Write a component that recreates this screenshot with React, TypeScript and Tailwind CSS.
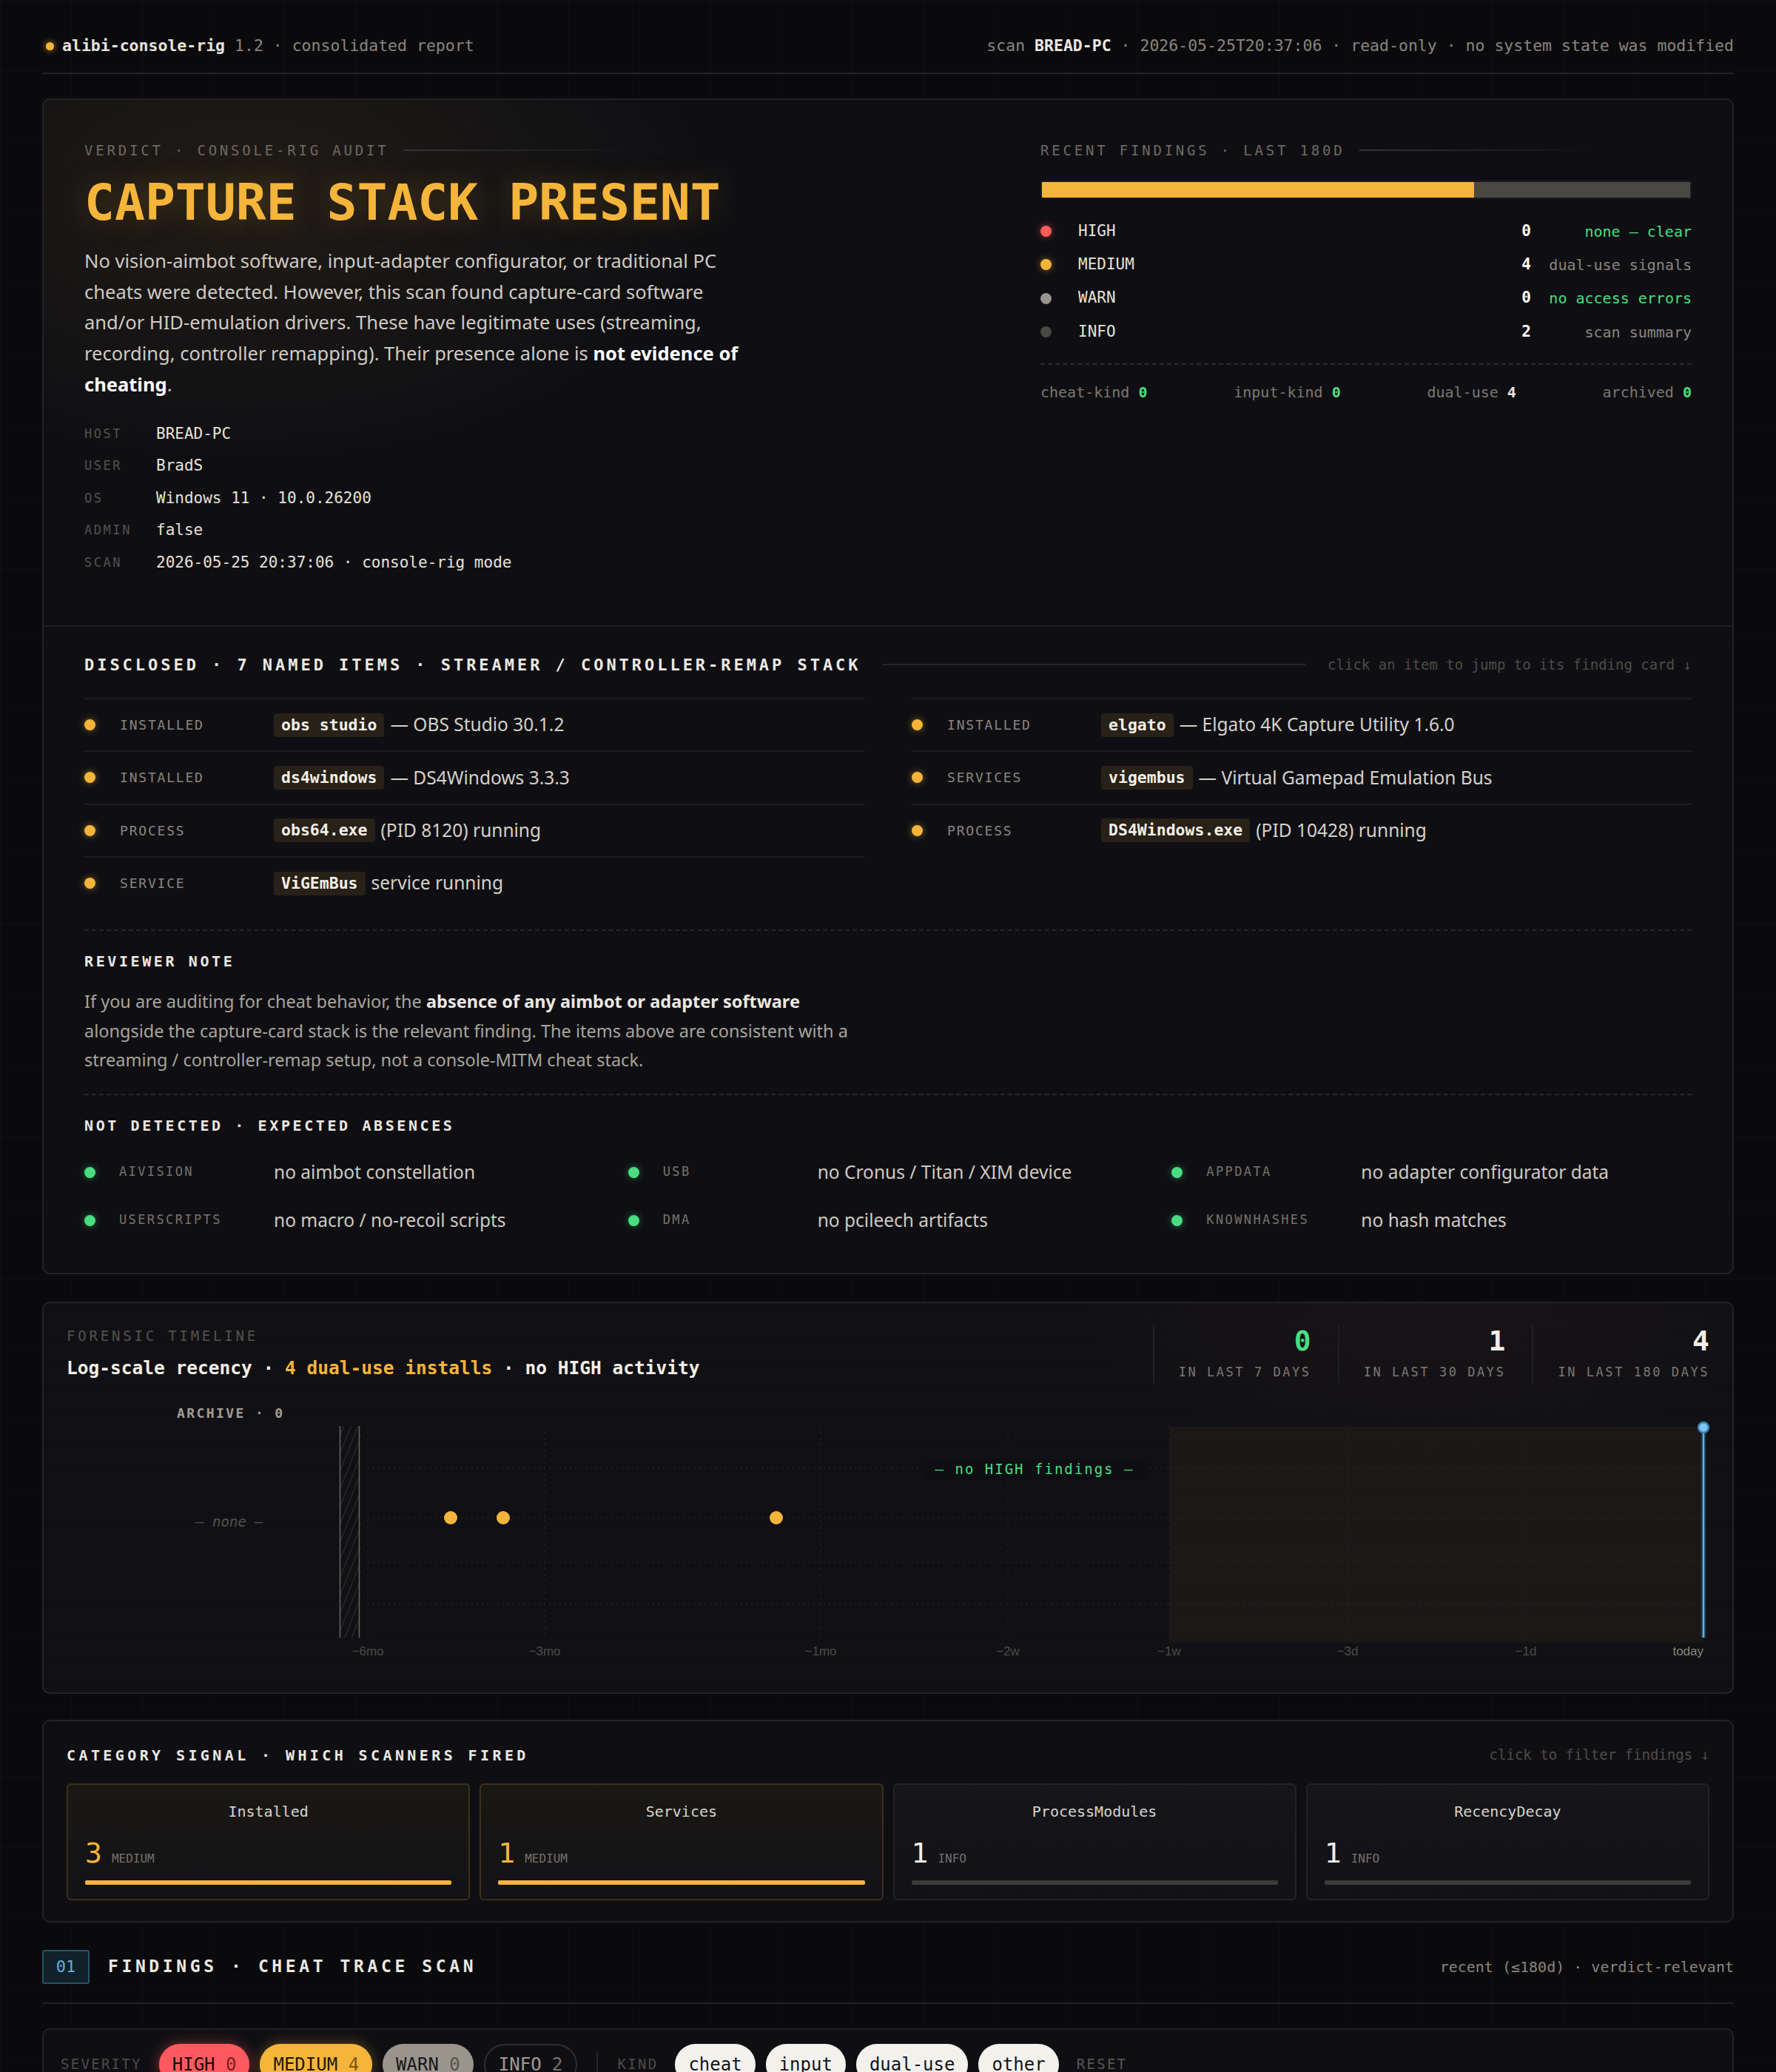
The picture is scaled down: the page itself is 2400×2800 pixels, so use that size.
import React from 'react';

type Tone = 'high' | 'medium' | 'warn' | 'info' | 'ok';

const dotTone: Record<Tone, string> = {
  high: 'bg-[#ff5a5a] shadow-[0_0_10px_rgba(255,90,90,0.55)]',
  medium: 'bg-[#f5b53a] shadow-[0_0_10px_rgba(245,181,58,0.5)]',
  warn: 'bg-[#9a958c]',
  info: 'bg-[#4a4844]',
  ok: 'bg-[#4ade80] shadow-[0_0_10px_rgba(74,222,128,0.45)]',
};

const Dot: React.FC<{ tone: Tone }> = ({ tone }) => (
  <span className={`h-[15px] w-[15px] shrink-0 rounded-full ${dotTone[tone]}`} />
);

const severityRows: { label: string; tone: Tone; count: number; note: string; noteClass: string }[] = [
  { label: 'HIGH', tone: 'high', count: 0, note: 'none — clear', noteClass: 'text-[#4ade80]' },
  { label: 'MEDIUM', tone: 'medium', count: 4, note: 'dual-use signals', noteClass: 'text-[#8a857d]' },
  { label: 'WARN', tone: 'warn', count: 0, note: 'no access errors', noteClass: 'text-[#4ade80]' },
  { label: 'INFO', tone: 'info', count: 2, note: 'scan summary', noteClass: 'text-[#8a857d]' },
];

const meta = [
  ['HOST', 'BREAD-PC'],
  ['USER', 'BradS'],
  ['OS', 'Windows 11 · 10.0.26200'],
  ['ADMIN', 'false'],
  ['SCAN', '2026-05-25 20:37:06 · console-rig mode'],
];

const disclosed = [
  { kind: 'INSTALLED', name: 'obs studio', rest: '— OBS Studio 30.1.2' },
  { kind: 'INSTALLED', name: 'elgato', rest: '— Elgato 4K Capture Utility 1.6.0' },
  { kind: 'INSTALLED', name: 'ds4windows', rest: '— DS4Windows 3.3.3' },
  { kind: 'SERVICES', name: 'vigembus', rest: '— Virtual Gamepad Emulation Bus' },
  { kind: 'PROCESS', name: 'obs64.exe', rest: '(PID 8120) running' },
  { kind: 'PROCESS', name: 'DS4Windows.exe', rest: '(PID 10428) running' },
  { kind: 'SERVICE', name: 'ViGEmBus', rest: 'service running' },
];

const absences = [
  ['AIVISION', 'no aimbot constellation'],
  ['USB', 'no Cronus / Titan / XIM device'],
  ['APPDATA', 'no adapter configurator data'],
  ['USERSCRIPTS', 'no macro / no-recoil scripts'],
  ['DMA', 'no pcileech artifacts'],
  ['KNOWNHASHES', 'no hash matches'],
];

const categories = [
  { name: 'Installed', count: 3, sev: 'MEDIUM', hot: true },
  { name: 'Services', count: 1, sev: 'MEDIUM', hot: true },
  { name: 'ProcessModules', count: 1, sev: 'INFO', hot: false },
  { name: 'RecencyDecay', count: 1, sev: 'INFO', hot: false },
];

// x positions inside the timeline svg (log-scale recency axis)
const ticks = [
  { label: '−6mo', x: 407 },
  { label: '−3mo', x: 646 },
  { label: '−1mo', x: 1019 },
  { label: '−2w', x: 1272 },
  { label: '−1w', x: 1490 },
  { label: '−3d', x: 1731 },
  { label: '−1d', x: 1972 },
];
const lanes = [92, 159, 219, 276];
const hits = [519, 590, 959];

const SectionLabel: React.FC<{ children: React.ReactNode }> = ({ children }) => (
  <div className="flex h-[28px] items-center">
    <span className="text-[19px] tracking-[0.2em] text-[#6e6961]">{children}</span>
    <span className="ml-[20px] h-[2px] w-[310px] bg-gradient-to-r from-[#34343c] to-transparent" />
  </div>
);

const Timeline: React.FC = () => (
  <svg width="2220" height="355" viewBox="0 0 2220 355" className="mt-[23px] block">
    <defs>
      <pattern id="hatch" width="9" height="9" patternUnits="userSpaceOnUse" patternTransform="rotate(22)">
        <line x1="0" y1="0" x2="0" y2="9" stroke="#3f3d39" strokeWidth="1.4" />
      </pattern>
    </defs>
    <text x="149" y="24" fill="#a29d95" fontSize="18" fontWeight="700" letterSpacing="2.4" fontFamily="DejaVu Sans Mono, monospace">
      ARCHIVE · 0
    </text>
    <text x="220" y="171" fill="#57534d" fontSize="19" fontStyle="italic" textAnchor="middle" fontFamily="DejaVu Sans Mono, monospace">
      – none –
    </text>
    <rect x="369" y="35" width="27" height="286" fill="url(#hatch)" />
    <line x1="369.5" y1="35" x2="369.5" y2="321" stroke="#6a665f" strokeWidth="1.5" />
    <line x1="395.5" y1="35" x2="395.5" y2="321" stroke="#6a665f" strokeWidth="1.5" />
    <rect x="1490" y="36" width="722" height="292" fill="rgba(245,181,58,0.045)" />
    {ticks.map((t) => (
      <line key={t.label} x1={t.x} y1="35" x2={t.x} y2="321" stroke="#26262c" strokeWidth="1.2" strokeDasharray="2 6" />
    ))}
    {lanes.map((y) => (
      <line key={y} x1="407" y1={y} x2="2212" y2={y} stroke="#2a2a30" strokeWidth="1.2" strokeDasharray="2 5" />
    ))}
    <rect x="1156" y="80" width="304" height="28" fill="#0f0f13" />
    <text x="1308" y="100" fill="#4ade80" fontSize="19" letterSpacing="2" textAnchor="middle" fontFamily="DejaVu Sans Mono, monospace">
      – no HIGH findings –
    </text>
    {hits.map((x) => (
      <circle key={x} cx={x} cy="159" r="9" fill="#f5b53a" />
    ))}
    <line x1="2212" y1="40" x2="2212" y2="321" stroke="#1c3445" strokeWidth="7" />
    <line x1="2212" y1="40" x2="2212" y2="321" stroke="#5ab4e6" strokeWidth="2.5" />
    <circle cx="2212" cy="37" r="7" fill="#7cc8f0" stroke="#3a7fae" strokeWidth="2.5" />
    {ticks.map((t) => (
      <text key={t.label} x={t.x} y="345" fill="#4d4a45" fontSize="17" textAnchor="middle" fontFamily="Liberation Sans, sans-serif">
        {t.label}
      </text>
    ))}
    <text x="2212" y="345" fill="#8a857d" fontSize="17" textAnchor="end" fontFamily="Liberation Sans, sans-serif">
      today
    </text>
  </svg>
);

export default function App() {
  return (
    <div className="min-h-screen bg-[#0a0a0d] bg-[linear-gradient(to_right,rgba(255,255,255,0.018)_1px,transparent_1px),linear-gradient(to_bottom,rgba(255,255,255,0.018)_1px,transparent_1px)] bg-[size:96px_96px] px-[57px] pb-[160px] font-['DejaVu_Sans_Mono','Liberation_Mono',monospace] text-[#e6e1d8]">
      {/* top bar */}
      <header className="flex items-center justify-between border-b-2 border-[#222228] pt-[48px] pb-[22px] text-[21.5px] leading-[28px]">
        <div className="flex items-center">
          <span className="mr-[11px] ml-[5px] h-[11px] w-[11px] rounded-full bg-[#f5b53a] shadow-[0_0_10px_rgba(245,181,58,0.7)]" />
          <span className="font-bold text-[#e8e3da]">alibi-console-rig</span>
          <span className="text-[#8a857d]">&nbsp;1.2 · consolidated report</span>
        </div>
        <div className="text-[#8a857d]">
          scan <span className="font-bold text-[#ece8e1]">BREAD-PC</span> · 2026-05-25T20:37:06 · read-only · no system state was modified
        </div>
      </header>

      {/* verdict card */}
      <section className="mt-[33px] rounded-[10px] border-2 border-[#222228] bg-[#0f0f13] bg-[radial-gradient(ellipse_900px_520px_at_12%_8%,rgba(245,181,58,0.075),transparent_70%)]">
        <div className="grid grid-cols-[1fr_880px] gap-[60px] px-[55px] pt-[54px] pb-[63px]">
          <div>
            <SectionLabel>VERDICT · CONSOLE-RIG AUDIT</SectionLabel>
            <h1 className="mt-[23px] text-[68px] leading-[68px] font-bold text-[#f5b53a] [text-shadow:0_0_40px_rgba(245,181,58,0.25)]">
              CAPTURE STACK PRESENT
            </h1>
            <p className="mt-[24px] max-w-[890px] font-['Noto_Sans','Open_Sans',sans-serif] text-[25.5px] leading-[41.7px] text-[#cfcac2]">
              No vision-aimbot software, input-adapter configurator, or traditional PC cheats were detected. However, this
              scan found capture-card software and/or HID-emulation drivers. These have legitimate uses (streaming,
              recording, controller remapping). Their presence alone is{' '}
              <strong className="font-bold text-white">not evidence of cheating</strong>.
            </p>
            <div className="mt-[24px]">
              {meta.map(([k, v]) => (
                <div key={k} className="flex h-[43.5px] items-center">
                  <span className="w-[97px] text-[17px] tracking-[0.15em] text-[#55514b]">{k}</span>
                  <span className="text-[21px] text-[#e6e1d8]">{v}</span>
                </div>
              ))}
            </div>
          </div>

          <div>
            <SectionLabel>RECENT FINDINGS · LAST 180D</SectionLabel>
            <div className="mt-[27px] flex h-[25px] overflow-hidden rounded-[3px] border-2 border-[#1b1b20] bg-[#4a4843]">
              <div className="w-[66.7%] bg-[#f5b53a]" />
            </div>
            <div className="mt-[21px]">
              {severityRows.map((r) => (
                <div key={r.label} className="flex h-[45.3px] items-center">
                  <Dot tone={r.tone} />
                  <span className="ml-[36px] flex-1 text-[21px] text-[#e6e1d8]">{r.label}</span>
                  <span className="text-[21px] font-bold text-white">{r.count}</span>
                  <span className={`ml-[24px] w-[193px] text-right text-[20px] ${r.noteClass}`}>{r.note}</span>
                </div>
              ))}
            </div>
            <div className="mt-[20px] border-t-2 border-dashed border-[#2a2a31]" />
            <div className="mt-[23px] flex justify-between text-[20px] leading-[28px] text-[#7d786f]">
              <span>
                cheat-kind <b className="text-[#4ade80]">0</b>
              </span>
              <span>
                input-kind <b className="text-[#4ade80]">0</b>
              </span>
              <span>
                dual-use <b className="text-[#e8e3da]">4</b>
              </span>
              <span>
                archived <b className="text-[#4ade80]">0</b>
              </span>
            </div>
          </div>
        </div>

        {/* disclosed stack */}
        <div className="border-t-2 border-[#1f1f25] px-[55px] pt-[37px] pb-[38px]">
          <div className="flex h-[28px] items-center">
            <span className="text-[22px] font-bold tracking-[0.18em] text-[#ece8e1]">
              DISCLOSED · 7 NAMED ITEMS · STREAMER / CONTROLLER-REMAP STACK
            </span>
            <span className="ml-[28px] h-[2px] flex-1 bg-[#25252c]" />
            <span className="ml-[30px] text-[19px] text-[#4f4b46]">click an item to jump to its finding card ↓</span>
          </div>
          <div className="mt-[31px] grid grid-cols-2 gap-x-[64px]">
            {disclosed.map((d) => (
              <div key={d.name} className="flex h-[71.3px] items-center border-t-2 border-[#1d1d23]">
                <Dot tone="medium" />
                <span className="ml-[33px] w-[208px] text-[18px] tracking-[0.1em] text-[#8a857d]">{d.kind}</span>
                <span className="rounded-[4px] bg-[#272117] px-[10px] py-[3px] text-[21.5px] leading-[26px] font-bold text-[#f3efe7]">
                  {d.name}
                </span>
                <span className="ml-[8px] font-['Noto_Sans','Open_Sans',sans-serif] text-[24.5px] text-[#d6d1c9]">{d.rest}</span>
              </div>
            ))}
          </div>

          <div className="mt-[28px] border-t-2 border-dashed border-[#26262d]" />
          <h3 className="mt-[27px] text-[20px] leading-[28px] font-bold tracking-[0.18em] text-[#ece8e1]">REVIEWER NOTE</h3>
          <p className="mt-[21px] max-w-[1050px] font-['Noto_Sans','Open_Sans',sans-serif] text-[23.5px] leading-[39.5px] text-[#a9a49c]">
            If you are auditing for cheat behavior, the{' '}
            <strong className="font-bold text-[#ece8e1]">absence of any aimbot or adapter software</strong> alongside the
            capture-card stack is the relevant finding. The items above are consistent with a streaming / controller-remap
            setup, not a console-MITM cheat stack.
          </p>

          <div className="mt-[25px] border-t-2 border-dashed border-[#26262d]" />
          <h3 className="mt-[27px] text-[20px] leading-[28px] font-bold tracking-[0.18em] text-[#ece8e1]">
            NOT DETECTED · EXPECTED ABSENCES
          </h3>
          <div className="mt-[17px] grid grid-cols-3 gap-x-[32px]">
            {absences.map(([k, v]) => (
              <div key={k} className="flex h-[65px] items-center">
                <Dot tone="ok" />
                <span className="ml-[32px] w-[209px] text-[17px] tracking-[0.14em] text-[#77726b]">{k}</span>
                <span className="font-['Noto_Sans','Open_Sans',sans-serif] text-[24.5px] text-[#cfcac2]">{v}</span>
              </div>
            ))}
          </div>
        </div>
      </section>

      {/* forensic timeline */}
      <section className="mt-[37px] rounded-[10px] border-2 border-[#222228] bg-[#101014] bg-[radial-gradient(ellipse_700px_300px_at_82%_0%,rgba(255,90,90,0.035),transparent_70%),repeating-linear-gradient(to_bottom,rgba(255,255,255,0.012)_0px,rgba(255,255,255,0.012)_1px,transparent_1px,transparent_4px)] px-[31px] pt-[30px] pb-[40px]">
        <div className="flex items-start justify-between">
          <div>
            <div className="text-[19px] leading-[28px] tracking-[0.2em] text-[#55514b]">FORENSIC TIMELINE</div>
            <div className="mt-[13px] text-[24.5px] leading-[34px] font-bold text-[#f2eee6]">
              Log-scale recency · <span className="text-[#f5b53a]">4 dual-use installs</span> · no HIGH activity
            </div>
          </div>
          <div className="flex">
            {[
              { n: '0', label: 'IN LAST 7 DAYS', cls: 'text-[#4ade80]' },
              { n: '1', label: 'IN LAST 30 DAYS', cls: 'text-[#f2eee6]' },
              { n: '4', label: 'IN LAST 180 DAYS', cls: 'text-[#f2eee6]' },
            ].map((s, i) => (
              <div
                key={s.label}
                className={`flex h-[78px] flex-col items-end border-l-2 border-[#1f1f25] pl-[33px] ${i === 2 ? 'pr-0' : 'pr-[36px]'}`}
              >
                <span className={`text-[38px] leading-[42px] font-bold ${s.cls}`}>{s.n}</span>
                <span className="mt-[9px] text-[17px] leading-[24px] tracking-[0.15em] text-[#7d7870]">{s.label}</span>
              </div>
            ))}
          </div>
        </div>
        <Timeline />
      </section>

      {/* category signal */}
      <section className="mt-[35px] rounded-[10px] border-2 border-[#222228] bg-[#0f0f13] px-[31px] pt-[32px] pb-[28px]">
        <div className="flex h-[28px] items-center justify-between">
          <span className="text-[20px] font-bold tracking-[0.22em] text-[#ece8e1]">CATEGORY SIGNAL · WHICH SCANNERS FIRED</span>
          <span className="text-[19px] text-[#4f4b46]">click to filter findings ↓</span>
        </div>
        <div className="mt-[24px] grid grid-cols-4 gap-[13px]">
          {categories.map((c) => (
            <div
              key={c.name}
              className={`h-[158px] rounded-[6px] border-2 px-[23px] pt-[22px] ${
                c.hot
                  ? 'border-[#3d3019] bg-gradient-to-b from-[#1a1814] to-[#131216]'
                  : 'border-[#222228] bg-gradient-to-b from-[#16161a] to-[#121216]'
              }`}
            >
              <div className="text-center text-[20px] leading-[28px] text-[#d8d3cb]">{c.name}</div>
              <div className="mt-[20px] flex items-baseline gap-[13px]">
                <span className={`text-[38px] leading-[44px] ${c.hot ? 'text-[#f5b53a]' : 'text-[#f2eee6]'}`}>{c.count}</span>
                <span className="text-[16px] text-[#77726b]">{c.sev}</span>
              </div>
              <div className={`mt-[15px] h-[6px] rounded-[2px] ${c.hot ? 'bg-[#f5b53a]' : 'bg-[#3d3b38]'}`} />
            </div>
          ))}
        </div>
      </section>

      {/* findings header */}
      <div className="mt-[37px] flex items-center justify-between border-b-2 border-[#222228] pb-[25px]">
        <div className="flex items-center">
          <span className="flex h-[46px] w-[64px] items-center justify-center rounded-[3px] border-2 border-[#2c5068] bg-[#112029] text-[22px] text-[#5ab0e0]">
            01
          </span>
          <span className="ml-[25px] text-[23px] font-bold tracking-[0.2em] text-[#ece8e1]">FINDINGS · CHEAT TRACE SCAN</span>
        </div>
        <span className="text-[20px] text-[#8a857d]">recent (≤180d) · verdict-relevant</span>
      </div>

      {/* filters */}
      <div className="mt-[33px] flex items-center rounded-[10px] border-2 border-[#222228] bg-[#0f0f13] px-[23px] py-[19px] text-[24px]">
        <span className="mr-[23px] text-[19px] tracking-[0.12em] text-[#4f4b46]">SEVERITY</span>
        <div className="flex gap-[14px]">
          <span className="flex h-[56px] items-center rounded-full bg-[#ff5a5f] px-[18px] text-[#1c0808] shadow-[0_0_18px_rgba(255,90,95,0.45)]">
            HIGH&nbsp;<span className="text-[#7a1d22]">0</span>
          </span>
          <span className="flex h-[56px] items-center rounded-full bg-[#f5b53a] px-[18px] text-[#1f1505] shadow-[0_0_18px_rgba(245,181,58,0.35)]">
            MEDIUM&nbsp;<span className="text-[#7a5518]">4</span>
          </span>
          <span className="flex h-[56px] items-center rounded-full bg-[#9a958c] px-[18px] text-[#17161a]">
            WARN&nbsp;<span className="text-[#55524c]">0</span>
          </span>
          <span className="flex h-[56px] items-center rounded-full border-2 border-[#2e2e35] px-[18px] text-[#a09b93]">
            INFO&nbsp;<span className="text-[#77726b]">2</span>
          </span>
        </div>
        <span className="mx-[26px] h-[36px] w-[2px] bg-[#26262d]" />
        <span className="mr-[23px] text-[19px] tracking-[0.12em] text-[#4f4b46]">KIND</span>
        <div className="flex gap-[14px]">
          {['cheat', 'input', 'dual-use', 'other'].map((k) => (
            <span key={k} className="flex h-[56px] items-center rounded-full bg-[#f3f1ec] px-[18px] text-[#141318]">
              {k}
            </span>
          ))}
        </div>
        <span className="ml-[24px] text-[19px] tracking-[0.12em] text-[#5a5650]">RESET</span>
      </div>
    </div>
  );
}
